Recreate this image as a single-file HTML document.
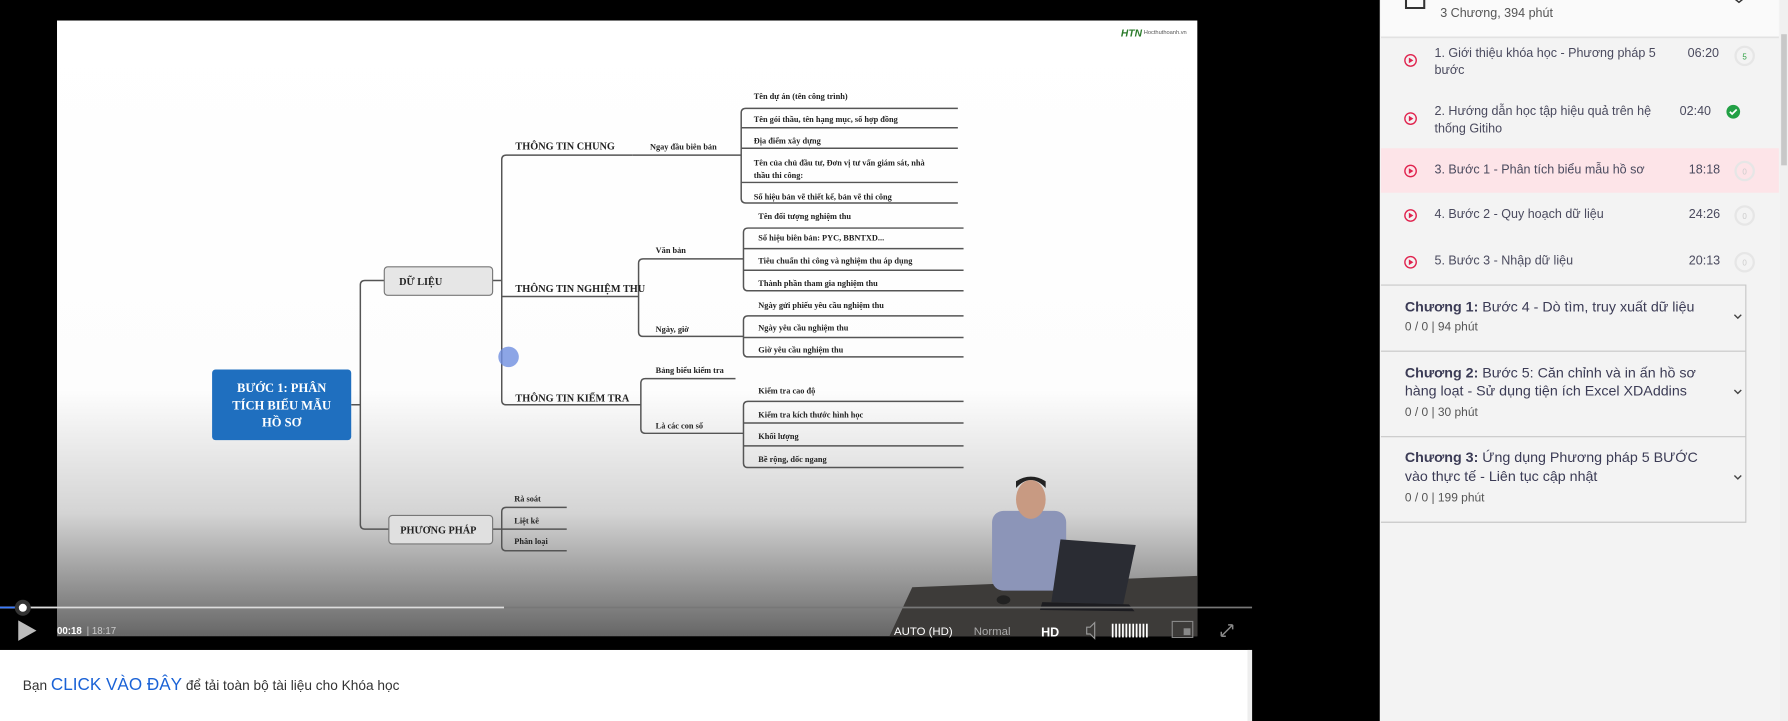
<!DOCTYPE html>
<html><head><meta charset="utf-8"><style>
html,body{margin:0;padding:0;width:1788px;height:721px;overflow:hidden;background:#000}
svg{display:block}
.s{font-family:"Liberation Serif",serif;font-weight:bold;fill:#222}
.a{font-family:"Liberation Sans",sans-serif}
</style></head><body>
<svg width="1788" height="721" viewBox="0 0 1568 632.3" preserveAspectRatio="none" xmlns="http://www.w3.org/2000/svg">
<defs>
<linearGradient id="g" x1="0" y1="0" x2="0" y2="1">
<stop offset="0" stop-color="#fff"/><stop offset="0.6" stop-color="#fdfdfd"/><stop offset="0.8" stop-color="#d4d4d4"/><stop offset="1" stop-color="#666"/>
</linearGradient>
</defs>
<rect x="0" y="0" width="1210" height="632.3" fill="#000"/>
<rect x="50" y="18" width="1000" height="540" fill="url(#g)"/>
<text x="983" y="32" class="a" font-size="9" font-weight="bold" fill="#2a7a2a" font-style="italic">HTN</text>
<text x="1003" y="30" class="a" font-size="5" fill="#555">Hocthuthoanh.vn</text>
<polygon points="800,515 1050,505 1050,558 780,558" fill="#3d3b39"/>
<rect x="870" y="448" width="65" height="70" rx="10" fill="#8c95b8"/>
<ellipse cx="904" cy="438" rx="13" ry="17" fill="#c89a82"/>
<path d="M891,428 q13,-14 26,0 v-6 q-13,-8 -26,0z" fill="#222"/>
<polygon points="930,473 996,478 985,530 922,528" fill="#2a2c33"/>
<polygon points="914,528 990,530 995,536 912,535" fill="#1c1c20"/>
<ellipse cx="880" cy="526" rx="6" ry="4" fill="#222"/>
<g fill="none" stroke="#555" stroke-width="1.3">
<path d="M308,355 H316 M337,246 H320 q-4,0 -4,4 V460 q0,4 4,4 H341"/>
<path d="M432,246 H440 M555,136 H444 q-4,0 -4,4 V351 q0,4 4,4 H562 M440,260 H560"/>
<path d="M555,136 H650 M840,95 H654 q-4,0 -4,4 V174 q0,4 4,4 H840 M650,112 H840 M650,130 H840 M650,160 H840"/>
<path d="M652,227 H564 q-4,0 -4,4 V291 q0,4 4,4 H652"/>
<path d="M845,200 H656 q-4,0 -4,4 V251 q0,4 4,4 H845 M652,218 H845 M652,237 H845"/>
<path d="M845,277 H656 q-4,0 -4,4 V309 q0,4 4,4 H845 M652,296 H845"/>
<path d="M645,332 H566 q-4,0 -4,4 V376 q0,4 4,4 H652"/>
<path d="M845,352 H656 q-4,0 -4,4 V406 q0,4 4,4 H845 M652,371 H845 M652,391 H845"/>
<path d="M432,464 H440 M497,445 H444 q-4,0 -4,4 V479 q0,4 4,4 H497 M440,464 H497"/>
</g>
<rect x="186" y="324" width="122" height="62" rx="3" fill="#1f6fbf"/>
<g class="s" font-size="11" text-anchor="middle" style="fill:#fff">
<text x="247" y="344">BƯỚC 1: PHÂN</text><text x="247" y="359">TÍCH BIỂU MẪU</text><text x="247" y="374">HỒ SƠ</text></g>
<rect x="337" y="234" width="95" height="25" rx="3" fill="#e6e6e6" stroke="#777"/>
<rect x="341" y="452" width="91" height="25" rx="3" fill="#e0e0e0" stroke="#777"/>
<g class="s" font-size="9">
<text x="350" y="250">DỮ LIỆU</text><text x="351" y="468">PHƯƠNG PHÁP</text>
<text x="452" y="131">THÔNG TIN CHUNG</text><text x="452" y="256">THÔNG TIN NGHIỆM THU</text><text x="452" y="352">THÔNG TIN KIỂM TRA</text>
</g>
<g class="s" font-size="7.3">
<text x="570" y="131">Ngay đầu biên bản</text>
<text x="661" y="87">Tên dự án (tên công trình)</text>
<text x="661" y="107">Tên gói thầu, tên hạng mục, số hợp đồng</text>
<text x="661" y="126">Địa điểm xây dựng</text>
<text x="661" y="145">Tên của chủ đầu tư, Đơn vị tư vấn giám sát, nhà</text>
<text x="661" y="156">thầu thi công:</text>
<text x="661" y="175">Số hiệu bản vẽ thiết kế, bản vẽ thi công</text>
<text x="575" y="222">Văn bản</text><text x="575" y="291">Ngày, giờ</text>
<text x="665" y="192">Tên đối tượng nghiệm thu</text>
<text x="665" y="211">Số hiệu biên bản: PYC,  BBNTXD...</text>
<text x="665" y="231">Tiêu chuẩn thi công và nghiệm thu áp dụng</text>
<text x="665" y="251">Thành phần tham gia nghiệm thu</text>
<text x="665" y="270">Ngày gửi phiếu yêu cầu nghiệm thu</text>
<text x="665" y="290">Ngày yêu cầu nghiệm thu</text>
<text x="665" y="309">Giờ yêu cầu nghiệm thu</text>
<text x="575" y="327">Bảng biểu kiểm tra</text><text x="575" y="376">Là các con số</text>
<text x="665" y="345">Kiểm tra cao độ</text>
<text x="665" y="366">Kiểm tra kích thước hình học</text>
<text x="665" y="385">Khối lượng</text>
<text x="665" y="405">Bề rộng, dốc ngang</text>
<text x="451" y="440">Rà soát</text><text x="451" y="459">Liệt kê</text><text x="451" y="477">Phân loại</text>
</g>
<circle cx="446" cy="313" r="9" fill="#6f8fe0" opacity="0.8"/>
<rect x="0" y="532" width="1098" height="1.5" fill="#777"/>
<rect x="0" y="532" width="442" height="1.5" fill="#ddd"/>
<rect x="0" y="532" width="14" height="1.5" fill="#3a7bff"/>
<circle cx="20" cy="533" r="7" fill="#333"/><circle cx="20" cy="533" r="3.5" fill="#fff"/>
<polygon points="16,544 32,553 16,562" fill="#bbb"/>
<text x="50" y="556" class="a" font-size="8.5" fill="#fff" font-weight="bold">00:18</text>
<text x="76" y="556" class="a" font-size="8.5" fill="#ccc">|  18:17</text>
<text x="784" y="557" class="a" font-size="10" fill="#fff">AUTO (HD)</text>
<text x="854" y="557" class="a" font-size="10" fill="#aaa">Normal</text>
<text x="913" y="558" class="a" font-size="11" fill="#fff" font-weight="bold">HD</text>
<path d="M953,550 h3 l4,-4 v14 l-4,-4 h-3z" fill="none" stroke="#999"/>
<g fill="#fff"><rect x="975" y="547" width="1.5" height="12"/><rect x="978" y="547" width="1.5" height="12"/><rect x="981" y="547" width="1.5" height="12"/><rect x="984" y="547" width="1.5" height="12"/><rect x="987" y="547" width="1.5" height="12"/><rect x="990" y="547" width="1.5" height="12"/><rect x="993" y="547" width="1.5" height="12"/><rect x="996" y="547" width="1.5" height="12"/><rect x="999" y="547" width="1.5" height="12"/><rect x="1002" y="547" width="1.5" height="12"/><rect x="1005" y="547" width="1.5" height="12"/></g>
<rect x="1028" y="545" width="18" height="14" fill="none" stroke="#888"/><rect x="1038" y="551" width="6" height="6" fill="#888"/>
<path d="M1071,558 L1081,548 M1071,558 v-4 M1071,558 h4 M1081,548 v4 M1081,548 h-4" stroke="#888" stroke-width="1.3" fill="none"/>
<rect x="0" y="570" width="1098" height="63" fill="#fff"/>
<rect x="1094" y="570" width="4" height="63" fill="#eee"/>
<text x="20" y="605" class="a" font-size="12" fill="#333">Bạn <tspan fill="#1a62d6" font-size="15">CLICK VÀO ĐÂY</tspan> để tải toàn bộ tài liệu cho Khóa học</text>
<!-- sidebar -->
<rect x="1210" y="0" width="358" height="633" fill="#f3f3f3"/>
<rect x="1211" y="0" width="349" height="32" fill="#fafafa"/>
<rect x="1211" y="32" width="349" height="1.5" fill="#e2e2e2"/>
<path d="M1233,0 v7 h16 v-7" fill="none" stroke="#333" stroke-width="1.8"/>
<text x="1263" y="15" class="a" font-size="11" fill="#555">3 Chương, 394 phút</text>
<path d="M1520,-2 l5,4 l5,-4" stroke="#333" fill="none" stroke-width="1.3"/>
<rect x="1211" y="130" width="349" height="39" fill="#fde4e8"/>
<g fill="none" stroke="#e0234e" stroke-width="1.2">
<circle cx="1237" cy="53" r="5"/><circle cx="1237" cy="104" r="5"/><circle cx="1237" cy="150" r="5"/><circle cx="1237" cy="189" r="5"/><circle cx="1237" cy="230" r="5"/>
</g>
<g fill="#e0234e"><path d="M1235.5,50.5 l4,2.5 l-4,2.5z"/><path d="M1235.5,101.5 l4,2.5 l-4,2.5z"/><path d="M1235.5,147.5 l4,2.5 l-4,2.5z"/><path d="M1235.5,186.5 l4,2.5 l-4,2.5z"/><path d="M1235.5,227.5 l4,2.5 l-4,2.5z"/></g>
<g class="a" font-size="11" fill="#4a4a5e">
<text x="1258" y="50">1. Giới thiệu khóa học - Phương pháp 5</text><text x="1258" y="65">bước</text>
<text x="1258" y="101">2. Hướng dẫn học tập hiệu quả trên hệ</text><text x="1258" y="116">thống Gitiho</text>
<text x="1258" y="152">3. Bước 1 - Phân tích biểu mẫu hồ sơ</text>
<text x="1258" y="191">4. Bước 2 - Quy hoạch dữ liệu</text>
<text x="1258" y="232">5. Bước 3 - Nhập dữ liệu</text>
<text x="1480" y="50">06:20</text><text x="1473" y="101">02:40</text><text x="1481" y="152">18:18</text><text x="1481" y="191">24:26</text><text x="1481" y="232">20:13</text>
</g>
<g fill="none" stroke="#e6e6e6" stroke-width="2"><circle cx="1530" cy="49" r="8"/><circle cx="1530" cy="150" r="8"/><circle cx="1530" cy="189" r="8"/><circle cx="1530" cy="230" r="8"/></g>
<text x="1528" y="52" class="a" font-size="7" fill="#2ea043">5</text>
<g class="a" font-size="7" fill="#ccc"><text x="1528" y="153">0</text><text x="1528" y="192">0</text><text x="1528" y="233">0</text></g>
<circle cx="1520" cy="98" r="6" fill="#22a045"/><path d="M1517,98 l2,2 l4,-4" stroke="#fff" stroke-width="1.5" fill="none"/>
<g fill="none" stroke="#c8c8c8" stroke-width="1"><path d="M1211,250 H1531 V458 H1211 M1211,308 H1531 M1211,383 H1531"/></g>
<g class="a" font-size="12.5" fill="#3b3b55">
<text x="1232" y="273"><tspan font-weight="bold">Chương 1:</tspan> Bước 4 - Dò tìm, truy xuất dữ liệu</text>
<text x="1232" y="331"><tspan font-weight="bold">Chương 2:</tspan> Bước 5: Căn chỉnh và in ấn hồ sơ</text>
<text x="1232" y="347">hàng loạt - Sử dụng tiện ích Excel XDAddins</text>
<text x="1232" y="405"><tspan font-weight="bold">Chương 3:</tspan> Ứng dụng Phương pháp 5 BƯỚC</text>
<text x="1232" y="422">vào thực tế - Liên tục cập nhật</text>
</g>
<g class="a" font-size="10.5" fill="#555">
<text x="1232" y="290">0 / 0   |   94 phút</text><text x="1232" y="365">0 / 0   |   30 phút</text><text x="1232" y="440">0 / 0   |   199 phút</text>
</g>
<g fill="none" stroke="#444" stroke-width="1.2"><path d="M1521,276 l3,3 l3,-3"/><path d="M1521,342 l3,3 l3,-3"/><path d="M1521,417 l3,3 l3,-3"/></g>
<rect x="1561" y="0" width="7" height="633" fill="#f0f0f0"/><rect x="1562" y="30" width="5" height="115" fill="#c8c8c8"/>
</svg>
</body></html>
